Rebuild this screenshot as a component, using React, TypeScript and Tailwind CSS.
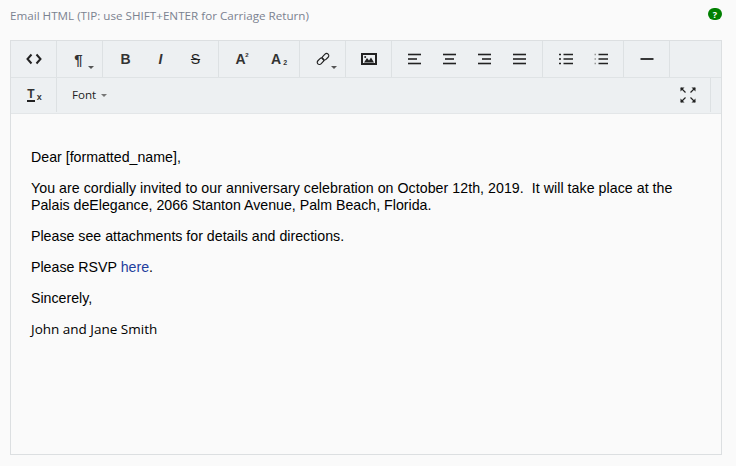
import type { ReactNode } from "react";

const Caret = () => (
  <span className="absolute right-[3px] bottom-[8px] border-x-[3px] border-t-[3px] border-x-transparent border-t-[#555]" />
);

function Btn({ children, caret }: { children: ReactNode; caret?: boolean }) {
  return (
    <div className="relative flex h-[36px] w-[35px] items-center justify-center text-[#222]">
      {children}
      {caret && <Caret />}
    </div>
  );
}

function Group({ children }: { children: ReactNode }) {
  return <div className="flex h-[36px] border-r border-[#dde1e3] px-[5px]">{children}</div>;
}

const Icon = ({ children, w = 16, h = 16 }: { children: ReactNode; w?: number; h?: number }) => (
  <svg width={w} height={h} viewBox={`0 0 ${w} ${h}`} fill="none" stroke="#222" strokeWidth="1.5">
    {children}
  </svg>
);

const Letter = ({ children, cls }: { children: ReactNode; cls: string }) => (
  <span className={`font-['Liberation_Sans',Arial,sans-serif] leading-none ${cls}`}>{children}</span>
);

function AlignIcon({ lines }: { lines: [number, number][] }) {
  return (
    <Icon w={14} h={12}>
      {lines.map(([a, b], i) => (
        <path key={i} d={`M${a} ${1.5 + i * 4.5}H${b}`} strokeWidth="1.6" />
      ))}
    </Icon>
  );
}

export default function App() {
  return (
    <div className="h-[466px] w-[736px] overflow-hidden bg-[#fafafa] pl-[10px] pr-[14px] font-['Open_Sans',sans-serif]">
      <div className="flex h-[32px] items-center justify-between">
        <span className="text-[11.65px] text-[#7a8290]">Email HTML (TIP: use SHIFT+ENTER for Carriage Return)</span>
        <span className="mb-[4px] flex h-[12px] w-[14px] items-center justify-center rounded-full bg-[#008000] text-[9px] font-bold leading-none text-white">
          ?
        </span>
      </div>
      <div className="mt-[8px] flex h-[415px] w-[712px] flex-col border border-[#dcdfe1]">
        <div className="flex h-[37px] border-b border-[#dfe3e5] bg-[#edf0f2]">
          <Group>
            <Btn>
              <Icon w={16} h={12}>
                <path d="M5.5 1.5L1.5 6l4 4.5M10.5 1.5l4 4.5-4 4.5" strokeWidth="2" />
              </Icon>
            </Btn>
          </Group>
          <Group>
            <Btn caret>
              <span className="-ml-[2px]">
                <Letter cls="text-[15px] font-bold text-[#333]">¶</Letter>
              </span>
            </Btn>
          </Group>
          <Group>
            <Btn>
              <Letter cls="text-[14px] font-bold text-[#333]">B</Letter>
            </Btn>
            <Btn>
              <Letter cls="text-[14px] font-bold italic text-[#333]">I</Letter>
            </Btn>
            <Btn>
              <Letter cls="text-[14px] line-through">S</Letter>
            </Btn>
          </Group>
          <Group>
            <Btn>
              <Letter cls="relative -ml-[2px] text-[14px] font-bold text-[#333]">
                A<span className="absolute -right-[3px] top-0 text-[6px]">2</span>
              </Letter>
            </Btn>
            <Btn>
              <Letter cls="relative -ml-[1px] text-[14px] font-bold text-[#333]">
                A<span className="absolute -right-[6px] bottom-0 text-[7px]">2</span>
              </Letter>
            </Btn>
          </Group>
          <Group>
            <Btn caret>
              <Icon w={14} h={14}>
                <rect x="0.8" y="7" width="7.4" height="4.4" rx="2.2" transform="rotate(-45 4.5 9.2)" strokeWidth="1.2" />
                <rect x="5.8" y="2.6" width="7.4" height="4.4" rx="2.2" transform="rotate(-45 9.5 4.8)" strokeWidth="1.2" />
              </Icon>
            </Btn>
          </Group>
          <Group>
            <Btn>
              <Icon w={16} h={12}>
                <rect x="1" y="1" width="14" height="10" strokeWidth="2" />
                <path d="M3 9.5l3-4.5 2 2.5L10 4.5l3 5z" fill="#222" stroke="none" />
                <circle cx="4.2" cy="4" r="1" fill="#222" stroke="none" />
              </Icon>
            </Btn>
          </Group>
          <Group>
            <Btn>
              <AlignIcon lines={[[0, 13], [0, 9], [0, 13]]} />
            </Btn>
            <Btn>
              <AlignIcon lines={[[0, 13], [2, 11], [0, 13]]} />
            </Btn>
            <Btn>
              <AlignIcon lines={[[0, 13], [4, 13], [0, 13]]} />
            </Btn>
            <Btn>
              <AlignIcon lines={[[0, 13], [0, 13], [0, 13]]} />
            </Btn>
          </Group>
          <Group>
            <Btn>
              <Icon w={14} h={12}>
                <path d="M4.5 1.5H14M4.5 6H14M4.5 10.5H14" strokeWidth="1.6" />
                <path d="M0 1.5H2M0 6H2M0 10.5H2" strokeWidth="1.6" />
              </Icon>
            </Btn>
            <Btn>
              <Icon w={14} h={12}>
                <path d="M4.5 1.5H14M4.5 6H14M4.5 10.5H14" strokeWidth="1.6" />
                <path d="M0.5 1.5H2M0.5 6H2M0.5 10.5H2" strokeWidth="1.3" stroke="#999" />
              </Icon>
            </Btn>
          </Group>
          <Group>
            <Btn>
              <Icon w={14} h={4}>
                <path d="M0.5 2H13.5" strokeWidth="1.8" />
              </Icon>
            </Btn>
          </Group>
        </div>
        <div className="flex h-[36px] items-start border-b border-[#e3e6e8] bg-[#edf0f2]">
          <div className="flex h-[34px] border-r border-[#dde1e3] px-[5px]">
            <div className="flex h-[34px] w-[35px] items-center justify-center">
              <span className="relative -ml-[5px] border-b-2 border-[#222] font-['Liberation_Sans',Arial,sans-serif] text-[12px] font-bold leading-[11px] text-[#333]">
                T<span className="absolute -right-[7px] bottom-[-3px] text-[9px] font-bold">x</span>
              </span>
            </div>
          </div>
          <div className="flex h-[34px] flex-1 items-center pl-[15px] text-[11.6px] text-[#222]">
            Font
            <span className="ml-[5px] border-x-[3px] border-t-[3px] border-x-transparent border-t-[#777]" />
          </div>
          <div className="flex h-[34px] w-[45px] items-center justify-center border-r border-[#dde1e3]">
            <Icon w={16} h={16}>
              <path d="M1 1l4.5 4.5M15 1l-4.5 4.5M1 15l4.5-4.5M15 15l-4.5-4.5" strokeWidth="1.2" />
              <path d="M0.5 0.5h4l-4 4zM15.5 0.5h-4l4 4zM0.5 15.5h4l-4-4zM15.5 15.5h-4l4-4z" fill="#222" stroke="none" />
            </Icon>
          </div>
          <div className="w-[10px]" />
        </div>
        <div className="flex flex-1 flex-col gap-[14px] bg-[#fafafa] px-[20px] pt-[35px] font-['Liberation_Sans',Arial,sans-serif] text-[14.2px] leading-[17px] text-black">
          <p>Dear [formatted_name],</p>
          <p>
            <span className="tracking-[0.045px]">You are cordially invited to our anniversary celebration on October 12th, 2019.&nbsp; It will take place at the</span> Palais deElegance, 2066 Stanton Avenue, Palm Beach, Florida.
          </p>
          <p>Please see attachments for details and directions.</p>
          <p>
            Please RSVP <span className="text-[#1f3f9e]">here</span>.
          </p>
          <p>Sincerely,</p>
          <p className="font-['Open_Sans',sans-serif] text-[13.5px]">John and Jane Smith</p>
        </div>
      </div>
    </div>
  );
}
